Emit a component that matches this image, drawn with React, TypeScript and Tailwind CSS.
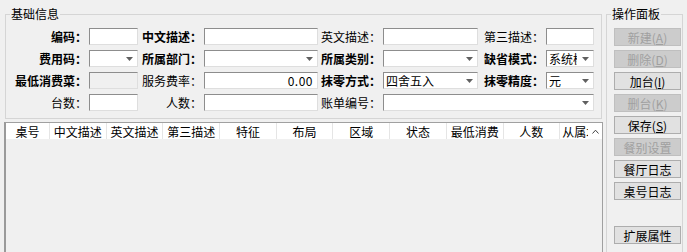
import React from "react";

const FONT = "font-['Noto_Sans_CJK_SC','Noto_Sans',sans-serif]";

function Label({ text, bold }: { text: string; bold?: boolean }) {
  return (
    <div className={`h-[17px] flex items-center justify-end pr-[2px] whitespace-nowrap text-[12px] leading-[15px] text-[#000] ${bold ? "font-bold" : ""}`}>
      {text}：
    </div>
  );
}

function Box({ value, disabled, right, combo }: { value?: string; disabled?: boolean; right?: boolean; combo?: boolean }) {
  return (
    <div
      className={`h-[17px] flex items-center overflow-hidden border border-t-[#8d8d8d] border-l-[#8d8d8d] border-r-[#dedede] border-b-[#dedede] ${
        disabled ? "bg-[#f0f0f0]" : "bg-white"
      }`}
    >
      <span
        className={`flex-1 min-w-0 px-[2px] whitespace-nowrap overflow-hidden text-[12px] leading-[15px] ${
          right ? "text-right pr-[4px] text-[11px] tracking-[0.5px]" : ""
        }`}
      >
        {value}
      </span>
      {combo && (
        <span className="w-[16px] shrink-0 flex items-center justify-center bg-white">
          <svg width="7" height="4" viewBox="0 0 7 4"><path d="M0 0h7L3.5 4z" fill="#606060" /></svg>
        </span>
      )}
    </div>
  );
}

function Btn({ label, hot, disabled }: { label: string; hot?: string; disabled?: boolean }) {
  return (
    <button
      className={`w-[67px] h-[18px] border text-[12px] leading-[15px] flex items-center justify-center ${
        disabled ? "bg-[#cccccc] border-[#bfbfbf] text-[#a0a0a0]" : "bg-[#e1e1e1] border-[#adadad] text-black"
      }`}
    >
      {label}
      {hot && (
        <span>
          (<span className="underline">{hot}</span>)
        </span>
      )}
    </button>
  );
}

const headers = ["中文描述", "英文描述", "第三描述", "特征", "布局", "区域", "状态", "最低消费", "人数"];

export default function App() {
  return (
    <div className={`w-[687px] h-[252px] bg-[#f0f0f0] flex overflow-hidden ${FONT}`}>
      {/* 左侧 */}
      <div className="w-[599px] ml-[4px] flex flex-col shrink-0">
        <fieldset className="ml-[1px] mt-[6px] w-[597px] h-[113px] border border-[#d5d5d5] px-0 pb-0">
          <legend className="ml-[4px] text-[12px] leading-[16px] px-px">基础信息</legend>
          <div className="mt-[6px] grid grid-cols-[83px_49px_66px_114px_65px_95px_68px_48px] gap-y-[5px]">
            <Label text="编码" bold />
            <Box />
            <Label text="中文描述" bold />
            <Box />
            <Label text="英文描述" />
            <Box />
            <Label text="第三描述" />
            <Box />

            <Label text="费用码" bold />
            <Box combo />
            <Label text="所属部门" bold />
            <Box combo />
            <Label text="所属类别" bold />
            <Box combo />
            <Label text="缺省模式" bold />
            <Box combo value="系统模式" />

            <Label text="最低消费菜" bold />
            <Box disabled />
            <Label text="服务费率" />
            <Box value="0.00" right />
            <Label text="抹零方式" bold />
            <Box combo value="四舍五入" />
            <Label text="抹零精度" bold />
            <Box combo value="元" />

            <Label text="台数" />
            <Box />
            <Label text="人数" />
            <Box />
            <Label text="账单编号" />
            <div className="col-span-3">
              <Box combo />
            </div>
          </div>
        </fieldset>

        <div className="mt-[3px] flex-1 border-l-2 border-t border-r border-l-[#9a9a9a] border-t-[#a0a0a0] border-r-[#a0a0a0] flex flex-col">
          <div className="h-[16px] bg-white flex text-[12px] leading-[15px]">
            <div className="w-[44px] shrink-0 flex items-center justify-center border-r border-[#e5e5e5]">桌号</div>
            {headers.map((h) => (
              <div key={h} className="w-[56.7px] shrink-0 flex items-center justify-center border-r border-[#e5e5e5] whitespace-nowrap">
                {h}
              </div>
            ))}
            <div className="w-[28px] shrink-0 flex items-center pl-[2px] overflow-hidden whitespace-nowrap">从属址</div>
            <div className="flex-1 flex items-center justify-center">
              <svg width="7" height="5" viewBox="0 0 7 5"><path d="M0.5 4.5L3.5 1.2L6.5 4.5" fill="none" stroke="#404040" strokeWidth="1" /></svg>
            </div>
          </div>
          <div className="flex-1 bg-[#f0f0f0]" />
        </div>
      </div>

      {/* 操作面板 */}
      <fieldset className="ml-[3px] mt-[6px] w-[77px] h-[270px] border border-[#d5d5d5] px-0 pb-0 shrink-0">
        <legend className="ml-[4px] text-[12px] leading-[16px] px-px">操作面板</legend>
        <div className="mt-[6px] pl-[7px] flex flex-col gap-[4px]">
          <Btn label="新建" hot="A" disabled />
          <Btn label="删除" hot="D" disabled />
          <Btn label="加台" hot="I" />
          <Btn label="删台" hot="K" disabled />
          <Btn label="保存" hot="S" />
          <Btn label="餐别设置" disabled />
          <Btn label="餐厅日志" />
          <Btn label="桌号日志" />
          <div className="h-[18px]" />
          <Btn label="扩展属性" />
        </div>
      </fieldset>
    </div>
  );
}
